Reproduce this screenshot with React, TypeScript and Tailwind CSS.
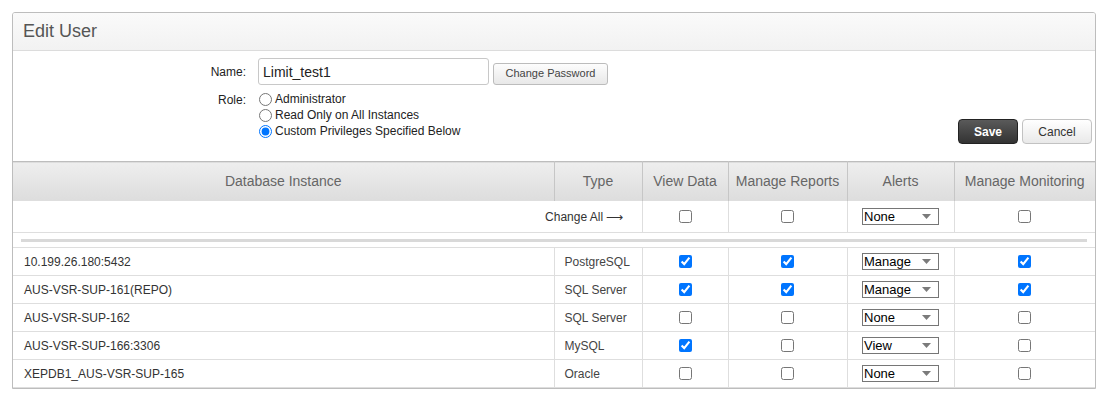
import React from "react";

type Row = {
  name: string;
  type: string;
  view: boolean;
  reports: boolean;
  alerts: string;
  monitor: boolean;
};

const rows: Row[] = [
  { name: "10.199.26.180:5432", type: "PostgreSQL", view: true, reports: true, alerts: "Manage", monitor: true },
  { name: "AUS-VSR-SUP-161(REPO)", type: "SQL Server", view: true, reports: true, alerts: "Manage", monitor: true },
  { name: "AUS-VSR-SUP-162", type: "SQL Server", view: false, reports: false, alerts: "None", monitor: false },
  { name: "AUS-VSR-SUP-166:3306", type: "MySQL", view: true, reports: false, alerts: "View", monitor: false },
  { name: "XEPDB1_AUS-VSR-SUP-165", type: "Oracle", view: false, reports: false, alerts: "None", monitor: false },
];

function AlertSelect({ value }: { value: string }) {
  return (
    <div className="mx-auto flex h-[17px] w-[77px] items-center justify-between border border-[#767676] bg-white pl-px pr-[7px] text-[13px] leading-none text-black">
      <span>{value}</span>
      <svg width="9" height="5" viewBox="0 0 9 5" aria-hidden="true">
        <path d="M0 0 H9 L4.5 5 Z" fill="#7b7b7b" />
      </svg>
    </div>
  );
}

function Check({ checked }: { checked: boolean }) {
  return (
    <input
      type="checkbox"
      defaultChecked={checked}
      className="m-0 block mx-auto h-[13px] w-[13px]"
    />
  );
}

const th =
  "border-x border-[#c6c6c6] px-1 text-center align-middle text-[14px] font-normal text-[#666]";
const td = "border border-[#dedede] align-middle";

export default function App() {
  return (
    <div className="min-h-screen bg-white pl-[12px] pt-[12px] font-['Liberation_Sans',Arial,sans-serif]">
      <div className="w-[1084px] overflow-hidden rounded-t-[3px] border border-[#bdbdbd] bg-white">
        {/* Title */}
        <div className="h-[38px] border-b border-[#dcdcdc] bg-gradient-to-b from-[#fafafa] to-[#f2f2f2] pl-[10px] pt-[6px] text-[18px] leading-[24px] text-[#555]">
          Edit User
        </div>

        {/* Form */}
        <div className="flex justify-between pb-[17px] pr-[3px] pt-[7px]">
          <div className="flex flex-col pb-[5px] text-[12px] text-[#222]">
            <div className="flex items-center">
              <label className="w-[233px] text-right">Name:</label>
              <input
                defaultValue="Limit_test1"
                className="ml-[12px] h-[27px] w-[231px] rounded-[3px] border border-[#c8c8c8] px-[4px] text-[14px] text-[#222] outline-none"
              />
              <button className="ml-[4px] mt-[4px] h-[22px] w-[115px] rounded-[3px] border border-[#bcbcbc] bg-gradient-to-b from-[#fdfdfd] to-[#e8e8e8] text-[11px] text-[#444]">
                Change Password
              </button>
            </div>
            <div className="mt-[6px] flex">
              <label className="w-[233px] pt-px text-right leading-[16px]">Role:</label>
              <div className="ml-[13px] flex flex-col">
                {[
                  ["Administrator", false],
                  ["Read Only on All Instances", false],
                  ["Custom Privileges Specified Below", true],
                ].map(([label, on]) => (
                  <label key={label as string} className="flex h-[16px] items-center">
                    <input
                      type="radio"
                      name="role"
                      defaultChecked={on as boolean}
                      className="m-0 h-[13px] w-[13px]"
                    />
                    <span className="ml-[3px]">{label as string}</span>
                  </label>
                ))}
              </div>
            </div>
          </div>
          <div className="flex items-end gap-[4px]">
            <button className="h-[25px] w-[60px] rounded-[4px] border border-[#222] bg-gradient-to-b from-[#5a5a5a] to-[#333] text-[12px] font-bold text-white">
              Save
            </button>
            <button className="h-[25px] w-[70px] rounded-[4px] border border-[#c2c2c2] bg-gradient-to-b from-[#ffffff] to-[#e9e9e9] text-[12px] text-[#333]">
              Cancel
            </button>
          </div>
        </div>

        {/* Privileges table */}
        <table className="w-full table-fixed border-collapse text-[12px] text-[#333]">
          <colgroup>
            <col className="w-[541px]" />
            <col className="w-[88px]" />
            <col className="w-[86px]" />
            <col className="w-[119px]" />
            <col className="w-[107px]" />
            <col className="w-[141px]" />
          </colgroup>
          <thead>
            <tr className="h-[39px] border-y border-[#bdbdbd] bg-gradient-to-b from-[#eeeeee] to-[#dddddd]">
              <th className={`${th} border-l-0`}>Database Instance</th>
              <th className={th}>Type</th>
              <th className={th}>View Data</th>
              <th className={th}>Manage Reports</th>
              <th className={th}>Alerts</th>
              <th className={`${th} border-r-0`}>Manage Monitoring</th>
            </tr>
          </thead>
          <tbody>
            <tr className="h-[32px]">
              <td colSpan={2} className={`${td} border-l-0 pr-[18px] text-right`}>
                Change All ⟶
              </td>
              <td className={td}>
                <Check checked={false} />
              </td>
              <td className={td}>
                <Check checked={false} />
              </td>
              <td className={td}>
                <AlertSelect value="None" />
              </td>
              <td className={`${td} border-r-0`}>
                <Check checked={false} />
              </td>
            </tr>
            <tr className="h-[15px]">
              <td colSpan={6} className={`${td} border-x-0 px-[8px] py-0`}>
                <div className="h-[3px] bg-[#d9d9d9]" />
              </td>
            </tr>
            {rows.map((r) => (
              <tr key={r.name} className="h-[28px]">
                <td className={`${td} border-l-0 pl-[11px]`}>{r.name}</td>
                <td className={`${td} pl-[10px] text-[#444]`}>{r.type}</td>
                <td className={td}>
                  <Check checked={r.view} />
                </td>
                <td className={td}>
                  <Check checked={r.reports} />
                </td>
                <td className={td}>
                  <AlertSelect value={r.alerts} />
                </td>
                <td className={`${td} border-r-0`}>
                  <Check checked={r.monitor} />
                </td>
              </tr>
            ))}
          </tbody>
        </table>
      </div>
    </div>
  );
}
